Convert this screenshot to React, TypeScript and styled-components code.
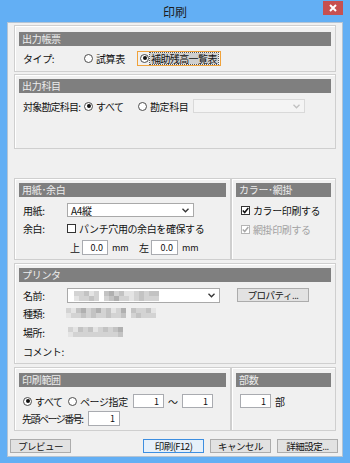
import React from "react";
import styled, { createGlobalStyle } from "styled-components";

const Global = createGlobalStyle`
  html, body { margin: 0; padding: 0; background: #63aff4; }
  body { font-family: "Noto Sans CJK JP", "Noto Sans", sans-serif; font-size: 10px; color: #111; }
  * { box-sizing: border-box; }
`;

const Window = styled.div`
  width: 350px;
  height: 463px;
  background: #63aff4;
  display: flex;
  flex-direction: column;
  padding: 0 7px 6px;
`;

const TitleBar = styled.div`
  height: 22px;
  display: grid;
  grid-template-columns: 20px 1fr 20px;
  align-items: start;
`;

const Title = styled.div`
  text-align: center;
  font-size: 12px;
  line-height: 24px;
  color: #1c1c1c;
`;

const CloseButton = styled.div`
  margin-top: 1px;
  height: 14px;
  background: #c75050;
  display: flex;
  align-items: center;
  justify-content: center;
`;

const Client = styled.div`
  flex: 1;
  background: #f0f0f0;
  border: 1px solid #b4c4d4;
  display: flex;
  flex-direction: column;
`;

const Body = styled.div`
  padding: 2px 6px 0;
  display: flex;
  flex-direction: column;
`;

const Group = styled.div<{ $h: number; $mt?: number; $w?: number; $fill?: boolean }>`
  height: ${(p) => p.$h}px;
  flex-shrink: 0;
  margin-top: ${(p) => p.$mt ?? 0}px;
  ${(p) => (p.$w ? `width: ${p.$w}px;` : p.$fill ? "flex: 1 1 0;" : "")}
  border: 1px solid #cfcfcf;
  box-shadow: inset 1px 1px 0 #ffffff;
  display: flex;
  flex-direction: column;
`;

const GroupRow = styled.div<{ $mt: number }>`
  display: flex;
  margin-top: ${(p) => p.$mt}px;
`;

const Header = styled.div<{ $mt: number }>`
  margin: ${(p) => p.$mt}px 4px 0;
  height: 14px;
  background: #7f7f7f;
  color: #ededed;
  font-size: 10px;
  line-height: 14px;
  padding-left: 3px;
  white-space: nowrap;
  letter-spacing: -0.3px;
`;

const Row = styled.div<{ $mt: number; $h?: number; $pl?: number }>`
  display: flex;
  align-items: center;
  height: ${(p) => p.$h ?? 14}px;
  margin-top: ${(p) => p.$mt}px;
  padding-left: ${(p) => p.$pl ?? 8}px;
  white-space: nowrap;
`;

const Label = styled.span<{ $w: number; $ls?: number }>`
  width: ${(p) => p.$w}px;
  flex-shrink: 0;
  white-space: nowrap;
  letter-spacing: ${(p) => p.$ls ?? -0.4}px;
`;

const Unit = styled.span<{ $w?: number; $ml?: number; $center?: boolean }>`
  ${(p) => (p.$w ? `width: ${p.$w}px;` : "")}
  margin-left: ${(p) => p.$ml ?? 0}px;
  flex-shrink: 0;
  font-size: ${(p) => (p.$center ? 10 : 9)}px;
  text-align: ${(p) => (p.$center ? "center" : "left")};
`;

const Option = styled.span<{ $w?: number; $disabled?: boolean }>`
  display: flex;
  align-items: center;
  gap: 3px;
  ${(p) => (p.$w ? `width: ${p.$w}px;` : "")}
  flex-shrink: 0;
  color: ${(p) => (p.$disabled ? "#a3a3a3" : "#111")};
  letter-spacing: -0.4px;
`;

const FocusOption = styled.span<{ $w: number }>`
  display: flex;
  align-items: center;
  gap: 1px;
  width: ${(p) => p.$w}px;
  height: 15px;
  border: 1px solid #f0a23a;
  padding: 0 2px;
  flex-shrink: 0;
  letter-spacing: -0.6px;
`;

const FocusText = styled.span`
  background: #cfcfcf;
  outline: 1px dotted #555;
  line-height: 11px;
  padding: 0 1px;
`;

const RadioCircle = styled.span<{ $on?: boolean }>`
  width: 9px;
  height: 9px;
  border-radius: 50%;
  border: 1px solid #4d4d4d;
  background: #fff;
  flex-shrink: 0;
  display: flex;
  align-items: center;
  justify-content: center;
  &::after {
    content: "";
    width: 4px;
    height: 4px;
    border-radius: 50%;
    background: ${(p) => (p.$on ? "#111" : "transparent")};
  }
`;

const CheckBox = styled.span<{ $disabled?: boolean }>`
  width: 9px;
  height: 9px;
  border: 1px solid ${(p) => (p.$disabled ? "#b5b5b5" : "#333")};
  background: #fff;
  flex-shrink: 0;
  display: flex;
  align-items: center;
  justify-content: center;
`;

const Select = styled.div<{ $w: number; $h?: number; $disabled?: boolean }>`
  width: ${(p) => p.$w}px;
  height: ${(p) => p.$h ?? 14}px;
  flex-shrink: 0;
  border: 1px solid ${(p) => (p.$disabled ? "#d9d9d9" : "#a9a9a9")};
  background: ${(p) => (p.$disabled ? "#f4f4f4" : "#fff")};
  display: flex;
  align-items: center;
  padding: 0 4px 0 3px;
  font-size: 10px;
  letter-spacing: -0.3px;
`;

const SelectValue = styled.span`
  flex: 1;
  display: flex;
  align-items: center;
`;

const NumInput = styled.div<{ $w: number; $h?: number }>`
  width: ${(p) => p.$w}px;
  height: ${(p) => p.$h ?? 14}px;
  flex-shrink: 0;
  border: 1px solid #a9abb0;
  background: #fff;
  display: flex;
  align-items: center;
  justify-content: flex-end;
  padding-right: 4px;
  font-size: 9px;
`;

const PushButton = styled.div<{ $w: number; $ml?: number; $focus?: boolean }>`
  width: ${(p) => p.$w}px;
  height: 14px;
  margin-left: ${(p) => p.$ml ?? 0}px;
  flex-shrink: 0;
  align-self: flex-start;
  border: 1px solid ${(p) => (p.$focus ? "#3d8ee0" : "#acacac")};
  background: ${(p) => (p.$focus ? "#e6f0fa" : "#e2e2e2")};
  display: flex;
  align-items: center;
  justify-content: center;
  font-size: 9.5px;
  letter-spacing: -0.5px;
  white-space: nowrap;
`;

const ButtonBar = styled.div`
  display: flex;
  justify-content: space-between;
  margin-top: 8px;
  padding: 0 4px 0 2px;
`;

const ButtonGroup = styled.div`
  display: flex;
  gap: 6px;
`;

const Mosaic = styled.div<{ $cols: number; $ml?: number }>`
  display: grid;
  grid-template-columns: repeat(${(p) => p.$cols}, 5px);
  grid-auto-rows: 5px;
  margin-left: ${(p) => p.$ml ?? 0}px;
  flex-shrink: 0;
`;

const Cell = styled.span<{ $c: string }>`
  background: ${(p) => p.$c};
`;

const shades: Record<string, string> = {
  ".": "transparent",
  a: "#e4e4e4",
  b: "#d3d3d3",
  c: "#c3c3c3",
  d: "#b0b0b0",
};

const Pixelated: React.FC<{ rows: string[]; ml?: number }> = ({ rows, ml }) => (
  <Mosaic $cols={rows[0].length} $ml={ml}>
    {rows.flatMap((r, i) =>
      r.split("").map((ch, j) => <Cell key={`${i}-${j}`} $c={shades[ch]} />)
    )}
  </Mosaic>
);

const Chevron: React.FC<{ color?: string }> = ({ color = "#333" }) => (
  <svg width="7" height="5" viewBox="0 0 7 5">
    <polyline points="0.5,0.8 3.5,3.8 6.5,0.8" fill="none" stroke={color} strokeWidth="1.3" />
  </svg>
);

const Check: React.FC<{ color?: string }> = ({ color = "#111" }) => (
  <svg width="7" height="7" viewBox="0 0 7 7">
    <polyline points="0.8,3.5 2.7,5.5 6.3,1" fill="none" stroke={color} strokeWidth="1.5" />
  </svg>
);

const Radio: React.FC<{ on?: boolean; w?: number; children: React.ReactNode }> = ({ on, w, children }) => (
  <Option $w={w}>
    <RadioCircle $on={on} />
    <span>{children}</span>
  </Option>
);

export default function App() {
  return (
    <>
      <Global />
      <Window>
        <TitleBar>
          <span />
          <Title>印刷</Title>
          <CloseButton>
            <svg width="8" height="8" viewBox="0 0 8 8">
              <path d="M1 1 L7 7 M7 1 L1 7" stroke="#fff" strokeWidth="2" />
            </svg>
          </CloseButton>
        </TitleBar>
        <Client>
          <Body>
            <Group $h={47}>
              <Header $mt={6}>出力帳票</Header>
              <Row $mt={5}>
                <Label $w={61}>タイプ:</Label>
                <Radio w={53}>試算表</Radio>
                <FocusOption $w={84}>
                  <RadioCircle $on />
                  <FocusText>補助残高一覧表</FocusText>
                </FocusOption>
              </Row>
            </Group>

            <Group $h={75} $mt={2}>
              <Header $mt={4}>出力科目</Header>
              <Row $mt={6}>
                <Label $w={61} $ls={-0.8}>対象勘定科目:</Label>
                <Radio on w={54}>すべて</Radio>
                <Radio w={55}>勘定科目</Radio>
                <Select $w={112} $disabled>
                  <SelectValue />
                  <Chevron color="#c0c0c0" />
                </Select>
              </Row>
            </Group>

            <GroupRow $mt={29}>
              <Group $h={82} $w={217}>
                <Header $mt={4}>用紙･余白</Header>
                <Row $mt={6}>
                  <Label $w={44}>用紙:</Label>
                  <Select $w={127}>
                    <SelectValue>A4縦</SelectValue>
                    <Chevron />
                  </Select>
                </Row>
                <Row $mt={4}>
                  <Label $w={44}>余白:</Label>
                  <Option>
                    <CheckBox />
                    <span>パンチ穴用の余白を確保する</span>
                  </Option>
                </Row>
                <Row $mt={5} $h={15}>
                  <Label $w={45} />
                  <Unit $w={14} $center>上</Unit>
                  <NumInput $w={26} $h={15}>0.0</NumInput>
                  <Unit $w={25} $ml={4}>mm</Unit>
                  <Unit $w={14} $center>左</Unit>
                  <NumInput $w={27} $h={15}>0.0</NumInput>
                  <Unit $ml={4}>mm</Unit>
                </Row>
              </Group>
              <Group $h={82} $fill>
                <Header $mt={4}>カラー･網掛</Header>
                <Row $mt={6} $pl={9}>
                  <Option>
                    <CheckBox>
                      <Check />
                    </CheckBox>
                    <span>カラー印刷する</span>
                  </Option>
                </Row>
                <Row $mt={5} $pl={9}>
                  <Option $disabled>
                    <CheckBox $disabled>
                      <Check color="#a8a8a8" />
                    </CheckBox>
                    <span>網掛印刷する</span>
                  </Option>
                </Row>
              </Group>
            </GroupRow>

            <Group $h={101} $mt={3}>
              <Header $mt={4}>プリンタ</Header>
              <Row $mt={6} $h={15}>
                <Label $w={44}>名前:</Label>
                <Select $w={153} $h={15}>
                  <SelectValue>
                    <Pixelated
                      ml={3}
                      rows={["bbcab.cdbcaabcbcc", "abbcb.bcdbbabcbbb"]}
                    />
                  </SelectValue>
                  <Chevron />
                </Select>
                <PushButton $w={72} $ml={17}>プロパティ...</PushButton>
              </Row>
              <Row $mt={3}>
                <Label $w={43}>種類:</Label>
                <Pixelated rows={["bacdbcdbcabd.cbbca", "abbcbcbbcbbc.bcbbb"]} />
              </Row>
              <Row $mt={5}>
                <Label $w={45}>場所:</Label>
                <Pixelated rows={["bacbcabcbcd", "abbbbbbbbbc"]} />
              </Row>
              <Row $mt={5}>
                <Label $w={44}>コメント:</Label>
              </Row>
            </Group>

            <GroupRow $mt={3}>
              <Group $h={64} $w={217}>
                <Header $mt={5}>印刷範囲</Header>
                <Row $mt={7}>
                  <Radio on w={45}>すべて</Radio>
                  <Radio w={65}>ページ指定</Radio>
                  <NumInput $w={31}>1</NumInput>
                  <Unit $w={18} $center>～</Unit>
                  <NumInput $w={31}>1</NumInput>
                </Row>
                <Row $mt={3} $h={15} $pl={7}>
                  <Label $w={66} $ls={-1.5}>先頭ページ番号:</Label>
                  <NumInput $w={32} $h={15}>1</NumInput>
                </Row>
              </Group>
              <Group $h={64} $fill>
                <Header $mt={5}>部数</Header>
                <Row $mt={7}>
                  <NumInput $w={31}>1</NumInput>
                  <Unit $ml={4} $center>部</Unit>
                </Row>
              </Group>
            </GroupRow>
          </Body>

          <ButtonBar>
            <PushButton $w={61}>プレビュー</PushButton>
            <ButtonGroup>
              <PushButton $w={61} $focus>印刷(F12)</PushButton>
              <PushButton $w={61}>キャンセル</PushButton>
              <PushButton $w={61}>詳細設定...</PushButton>
            </ButtonGroup>
          </ButtonBar>
        </Client>
      </Window>
    </>
  );
}
